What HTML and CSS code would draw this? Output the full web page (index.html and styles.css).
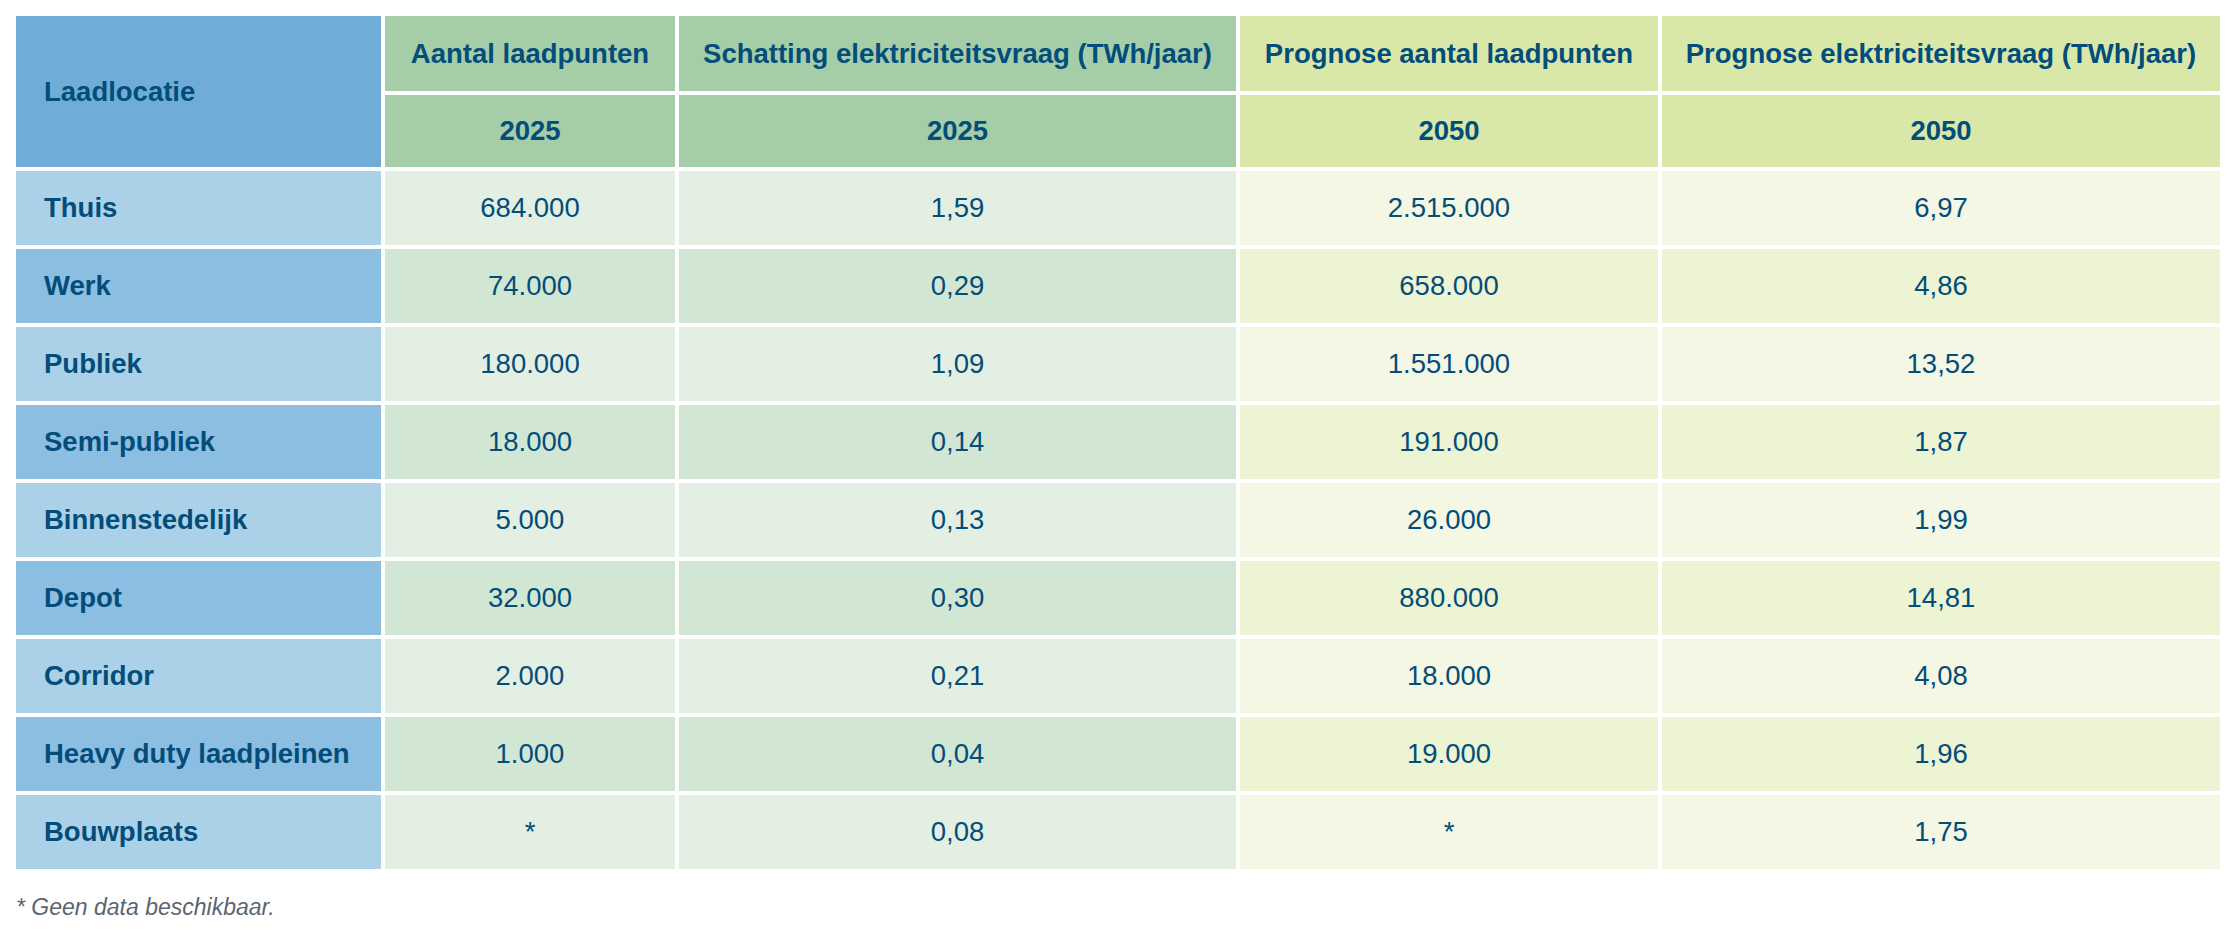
FILE: index.html
```html
<!DOCTYPE html>
<html lang="nl">
<head>
<meta charset="utf-8">
<title>Laadlocaties</title>
<link rel="stylesheet" href="styles.css">
</head>
<body>
<div class="wrap">
  <table class="data">
    <colgroup>
      <col class="c-loc">
      <col class="c-a">
      <col class="c-b">
      <col class="c-c">
      <col class="c-d">
    </colgroup>
    <thead>
      <tr class="h1">
        <th rowspan="2" class="loc-head">Laadlocatie</th>
        <th class="g">Aantal laadpunten</th>
        <th class="g">Schatting elektriciteitsvraag (TWh/jaar)</th>
        <th class="y">Prognose aantal laadpunten</th>
        <th class="y">Prognose elektriciteitsvraag (TWh/jaar)</th>
      </tr>
      <tr class="h2">
        <th class="g">2025</th>
        <th class="g">2025</th>
        <th class="y">2050</th>
        <th class="y">2050</th>
      </tr>
    </thead>
    <tbody>
      <tr><th>Thuis</th><td>684.000</td><td>1,59</td><td>2.515.000</td><td>6,97</td></tr>
      <tr><th>Werk</th><td>74.000</td><td>0,29</td><td>658.000</td><td>4,86</td></tr>
      <tr><th>Publiek</th><td>180.000</td><td>1,09</td><td>1.551.000</td><td>13,52</td></tr>
      <tr><th>Semi-publiek</th><td>18.000</td><td>0,14</td><td>191.000</td><td>1,87</td></tr>
      <tr><th>Binnenstedelijk</th><td>5.000</td><td>0,13</td><td>26.000</td><td>1,99</td></tr>
      <tr><th>Depot</th><td>32.000</td><td>0,30</td><td>880.000</td><td>14,81</td></tr>
      <tr><th>Corridor</th><td>2.000</td><td>0,21</td><td>18.000</td><td>4,08</td></tr>
      <tr><th>Heavy duty laadpleinen</th><td>1.000</td><td>0,04</td><td>19.000</td><td>1,96</td></tr>
      <tr><th>Bouwplaats</th><td>*</td><td>0,08</td><td>*</td><td>1,75</td></tr>
    </tbody>
  </table>
  <p class="note">* Geen data beschikbaar.</p>
</div>
</body>
</html>
```

FILE: styles.css
```css
html, body {
  margin: 0;
  padding: 0;
  background: #ffffff;
}

body {
  font-family: "Liberation Sans", Arial, sans-serif;
  color: #034d7a;
}

.wrap {
  padding: 12px;
}

.data {
  border-collapse: separate;
  border-spacing: 4px;
  table-layout: fixed;
  width: 2212px;
  font-size: 27.5px;
}

.c-loc { width: 365px; }
.c-a { width: 290px; }
.c-b { width: 557px; }
.c-c { width: 418px; }
.c-d { width: 558px; }

.data th,
.data td {
  padding: 0;
  text-align: center;
  vertical-align: middle;
  white-space: nowrap;
}

.data th {
  font-weight: bold;
}

.data td {
  font-weight: normal;
}

.h1 th { height: 75px; }
.h2 th { height: 72px; }
.data tbody tr th,
.data tbody tr td { height: 74px; }

.loc-head {
  background: #6fadd8;
}

.data .loc-head,
.data tbody th {
  text-align: left;
  padding-left: 28px;
}

.g { background: #a4cda8; }
.y { background: #d9e8a9; }

.data tbody tr:nth-child(odd) th { background: #abd1e8; }
.data tbody tr:nth-child(even) th { background: #8cbee2; }

.data tbody tr:nth-child(odd) td:nth-child(2),
.data tbody tr:nth-child(odd) td:nth-child(3) { background: #e4efe3; }
.data tbody tr:nth-child(even) td:nth-child(2),
.data tbody tr:nth-child(even) td:nth-child(3) { background: #d2e7d3; }

.data tbody tr:nth-child(odd) td:nth-child(4),
.data tbody tr:nth-child(odd) td:nth-child(5) { background: #f3f7e4; }
.data tbody tr:nth-child(even) td:nth-child(4),
.data tbody tr:nth-child(even) td:nth-child(5) { background: #ecf4d3; }

.note {
  margin: 21px 0 0 4px;
  font-size: 23px;
  font-style: italic;
  color: #5b6570;
}
```
